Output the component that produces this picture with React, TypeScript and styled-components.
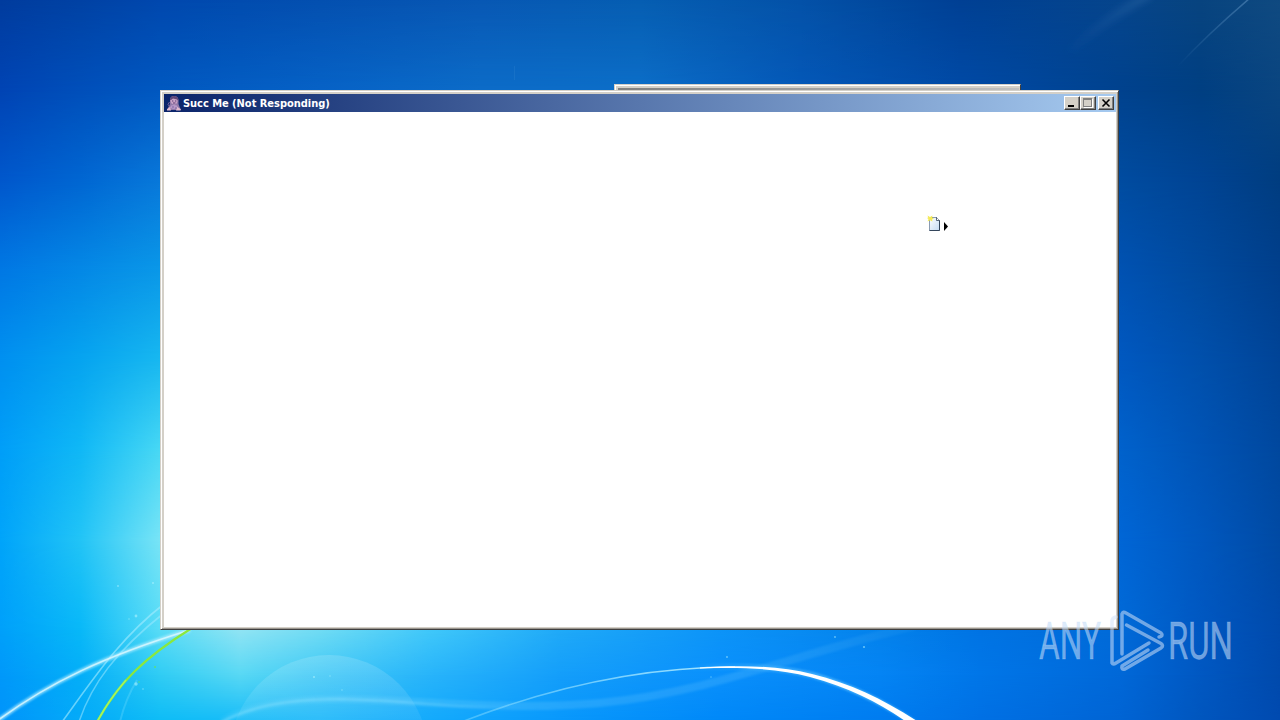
import React from "react";
import styled, { createGlobalStyle } from "styled-components";

const GlobalStyle = createGlobalStyle`
  html, body { margin: 0; padding: 0; overflow: hidden; background: #0060c8; }
  * { box-sizing: border-box; }
`;

const Desktop = styled.main`
  position: relative;
  width: 1280px;
  height: 720px;
  overflow: hidden;
  padding: 90px 161px 90px 160px;
`;

const Band = styled.div<{ $from: number; $to: number; $stops: string }>`
  position: absolute;
  inset: 0;
  background: linear-gradient(to right, ${(p) => p.$stops});
  mask-image: linear-gradient(to bottom, transparent ${(p) => p.$from}px, #000 ${(p) => p.$to}px);
`;

const Scenery = styled.svg`
  position: absolute;
  inset: 0;
`;

const BackWindow = styled.div`
  position: absolute;
  left: 614px;
  top: 84px;
  width: 407px;
  height: 20px;
  border: 1px solid #d4d0c8;
  border-right-color: #404040;
  background: linear-gradient(to right, #808080, #c0c0c0) 3px 3px / 401px 18px no-repeat #d4d0c8;
  box-shadow: inset 1px 1px 0 #fff;
`;

const Window = styled.section`
  position: relative;
  display: flex;
  flex-direction: column;
  width: 959px;
  height: 540px;
  padding: 3px 2px 2px 3px;
  background: #d4d0c8;
  border: 1px solid;
  border-color: #d4d0c8 #404040 #404040 #d4d0c8;
  box-shadow: inset 1px 1px 0 #fff, inset -1px -1px 0 #9a968f;
`;

const TitleBar = styled.header`
  display: flex;
  align-items: center;
  flex: 0 0 18px;
  padding: 0 2px;
  background: linear-gradient(to right, #0a246a, #a6caf0);
`;

const Title = styled.h1`
  flex: 1;
  margin: 0 0 0 1px;
  padding-top: 1px;
  color: #fff;
  font: bold 11px/17px "DejaVu Sans Condensed", "DejaVu Sans", sans-serif;
  letter-spacing: -0.03px;
  white-space: nowrap;
`;

const Controls = styled.div`
  display: flex;
`;

const ControlButton = styled.button<{ $gap?: boolean }>`
  width: 16px;
  height: 14px;
  padding: 0;
  margin-left: ${(p) => (p.$gap ? 2 : 0)}px;
  border: 1px solid;
  border-color: #fff #404040 #404040 #fff;
  background: #d4d0c8;
  box-shadow: inset -1px -1px 0 #808080;
  svg { display: block; }
`;

const Client = styled.div`
  flex: 1;
  background: #fff;
`;

const NewItem = styled.svg`
  position: absolute;
  left: 927px;
  top: 215px;
`;

const Watermark = styled.svg`
  position: absolute;
  left: 1030px;
  top: 600px;
  overflow: visible;
  font-family: Roboto, sans-serif;
  font-size: 51px;
`;

const cols = (xs: number[], cs: string) =>
  cs.split(" ").map((c, i) => `#${c} ${xs[i]}px`).join(", ");

const topX = [0, 80, 160, 320, 480, 640, 800, 960, 1120, 1200, 1280];
const sideX = [0, 80, 160, 1120, 1200, 1280];
const lowX = [0, 80, 160, 240, 320, 430, 560, 720, 880, 980, 1120, 1200, 1280];

const bands: [number, string][] = [
  [0, cols(topX, "003c9e 0042a4 0048ae 0450b0 0858b4 065eb2 0452a8 004094 06458c 08447f 104a80")],
  [90, cols(topX, "0044b4 004fba 0058c0 0662c6 0c6cc8 0c6ec8 0458b8 004aa6 00428e 003f82 0a4580")],
  [180, cols(sideX, "0057cc 0066d2 0878da 004ca0 004494 003d80")],
  [270, cols(sideX, "0078e4 0488e6 0a98e8 0052b2 004a9e 003f8c")],
  [360, cols(sideX, "0090f0 06a4f0 18b8f0 0058c0 0050ac 004497")],
  [450, cols(sideX, "009ef8 10b8f6 48d8f4 0062cc 0054b6 00489e")],
  [540, cols(sideX, "00a4fa 22c4f6 78e4f6 0066d6 0058bf 004aa4")],
  [630, cols(lowX, "00a0fa 08b8f8 58dcf6 90e4f4 70dcf4 40c8fa 20aaf8 0c94f8 0482ec 0074e4 006ad8 0058c2 004aac")],
  [675, cols(lowX, "0098fa 04aef8 30ccf4 58d8f4 40c8f6 28b4fa 149efa 0a90fc 0484f4 0076e8 0068d8 0058c2 004aac")],
  [720, cols(lowX, "0094fa 04aaf8 0ebcf6 18bcf8 20b8fa 14aafc 0898fc 0088f8 007cf0 0070e4 0064d4 0056be 004ab0")],
];

const sparks: [number, number, number][] = [
  [118, 586, 0.9], [153, 583, 1], [136, 616, 1.4], [129, 619, 0.7], [136, 684, 1.7], [143, 689, 0.8],
  [314, 677, 1.1], [330, 676, 0.7], [342, 690, 0.7], [727, 657, 0.9], [835, 637, 0.9], [864, 647, 1.1], [711, 677, 0.7],
];

function Wallpaper() {
  return (
    <>
      {bands.map(([y, stops], i) => (
        <Band key={y} $from={i ? bands[i - 1][0] : -1} $to={y} $stops={stops} />
      ))}
      <Scenery width="1280" height="720" fill="none">
        <defs>
          <filter id="soft" x="-20%" y="-20%" width="140%" height="140%"><feGaussianBlur stdDeviation="1" /></filter>
          <filter id="haze" x="-20%" y="-50%" width="140%" height="200%"><feGaussianBlur stdDeviation="3" /></filter>
          <linearGradient id="bubble" x1="0" y1="0" x2="0" y2="1">
            <stop offset="0" stopColor="#fff" stopOpacity=".15" />
            <stop offset=".35" stopColor="#fff" stopOpacity=".06" />
          </linearGradient>
          <linearGradient id="arc" gradientUnits="userSpaceOnUse" x1="460" y1="0" x2="920" y2="0">
            <stop offset="0" stopColor="#8fe0ff" stopOpacity=".4" />
            <stop offset=".5" stopColor="#a8e8ff" stopOpacity=".9" />
            <stop offset=".75" stopColor="#fff" />
          </linearGradient>
          <linearGradient id="glow" gradientUnits="userSpaceOnUse" x1="690" y1="0" x2="840" y2="0">
            <stop offset="0" stopColor="#65c6ff" stopOpacity="0" />
            <stop offset="1" stopColor="#65c6ff" stopOpacity=".7" />
          </linearGradient>
          <linearGradient id="thread" gradientUnits="userSpaceOnUse" x1="222" y1="0" x2="520" y2="0">
            <stop offset="0" stopColor="#a8ecff" stopOpacity=".4" />
            <stop offset=".6" stopColor="#a8ecff" stopOpacity=".35" />
            <stop offset="1" stopColor="#a8ecff" stopOpacity="0" />
          </linearGradient>
          <linearGradient id="swoosh" gradientUnits="userSpaceOnUse" x1="222" y1="0" x2="915" y2="0">
            <stop offset="0" stopColor="#a0e4ff" stopOpacity=".1" />
            <stop offset=".4" stopColor="#a0e4ff" stopOpacity=".17" />
            <stop offset=".75" stopColor="#a0e4ff" stopOpacity=".15" />
            <stop offset="1" stopColor="#a0e4ff" stopOpacity=".05" />
          </linearGradient>
          <linearGradient id="ray" gradientUnits="userSpaceOnUse" x1="1178" y1="66" x2="1250" y2="0">
            <stop offset="0" stopColor="#7fb0dc" stopOpacity="0" />
            <stop offset="1" stopColor="#7fb0dc" stopOpacity=".4" />
          </linearGradient>
          <linearGradient id="beam" gradientUnits="userSpaceOnUse" x1="1065" y1="55" x2="1150" y2="0">
            <stop offset="0" stopColor="#5a90c8" stopOpacity="0" />
            <stop offset="1" stopColor="#5a90c8" stopOpacity=".2" />
          </linearGradient>
        </defs>
        <path d="M1178 66Q1208 34 1250 -2" stroke="url(#ray)" strokeWidth="1.5" />
        <path d="M1060 62Q1090 28 1150 -6" stroke="url(#beam)" strokeWidth="9" filter="url(#haze)" />
        <circle cx="329" cy="754" r="99" fill="url(#bubble)" />
        <path d="M222 722Q258 699 340 699C440 701 510 711 600 703C710 693 790 655 915 626" stroke="url(#swoosh)" strokeWidth="8" filter="url(#soft)" />
        <path d="M222 722Q262 699 340 699Q385 700 430 704T520 706" stroke="url(#thread)" strokeWidth="2.2" filter="url(#soft)" />
        <path d="M120 722Q125 700 137 680" stroke="#8ce8ff" strokeOpacity=".25" strokeWidth="2" />
        <path d="M62 722C94 678 120 638 164 604" stroke="#a6ecff" strokeOpacity=".6" strokeWidth="1.6" />
        <path d="M79 722C91 685 116 651 164 613" stroke="#a6ecff" strokeOpacity=".5" strokeWidth="1.6" />
        <path d="M-3 721C50 682 105 656 190 630" stroke="#b8efff" strokeOpacity=".7" strokeWidth="4.2" filter="url(#soft)" />
        <path d="M-3 721C50 682 105 656 190 630" stroke="#e2faff" strokeOpacity=".75" strokeWidth="1.6" />
        <path d="M97 722C118 683 145 657 192 628" stroke="#8be83c" strokeWidth="2.2" />
        <path d="M97 722C106 705 114 694 126 680" stroke="#a4f45a" strokeWidth="1.8" />
        <path d="M464 721C570 680 660 667 735 667" stroke="url(#arc)" strokeWidth="1.6" />
        <path d="M690 668C735 665 775 666 812 675C850 686 885 703 917 725" stroke="url(#glow)" strokeWidth="6" filter="url(#soft)" />
        <path d="M700 667.5C745 665 780 666 812 674C852 684 885 700 920 723L908 723C880 703 850 688 810 677C780 669 748 667 700 668.5Z" fill="#fff" />
        {sparks.map(([x, y, r]) => (
          <circle key={`${x}-${y}`} cx={x} cy={y} r={r} fill="#b8f6ff" fillOpacity=".55" />
        ))}
        <circle cx="155" cy="667" r="1" fill="#58dc80" />
        <circle cx="139" cy="682" r=".8" fill="#58dc80" />
        <path d="M514.5 66V80" stroke="#5aa0e0" strokeOpacity=".15" />
      </Scenery>
    </>
  );
}

function AppIcon() {
  return (
    <svg width="16" height="16" viewBox="0 0 16 16">
      <path d="M4 5Q4 1 8 1Q12 1 12.5 5L12.5 9L14 13L13 15H3L2 13L4 9Z" fill="#8f78a8" />
      <path d="M4.5 5Q5 2 8.5 2Q11.5 3 11.5 6Q11 9.5 8 9.5Q4.5 9 4.5 5" fill="#c9a3c6" />
      <path d="M4 5Q4 1 8.5 1Q12.5 1.5 12.5 6L11 4.5L7 3.5L5 5Z" fill="#604878" />
      <path d="M6 6H7.3M9 6H10.3M7 8H9.5" stroke="#5b3b76" />
      <path d="M5 10.5Q8 9.5 11 10.5L12 13L8 14L4 13Z" fill="#b898c8" />
      <path d="M1 14L4 12L5 15.5H1ZM11 12L15 14L14.5 15.5H10Z" fill="#e0b8cc" />
      <path d="M3.5 7L2 9.5L3.5 11.5M6 12H8M9 13H11" stroke="#7d66a2" fill="none" />
    </svg>
  );
}

export default function App() {
  return (
    <Desktop>
      <GlobalStyle />
      <Wallpaper />
      <BackWindow />
      <Window>
        <TitleBar>
          <AppIcon />
          <Title>Succ Me (Not Responding)</Title>
          <Controls>
            <ControlButton aria-label="Minimize">
              <svg width="14" height="12"><path d="M3 8h6v2H3z" fill="#000" /></svg>
            </ControlButton>
            <ControlButton aria-label="Maximize">
              <svg width="14" height="12" shapeRendering="crispEdges">
                <path d="M3 2h9v9H3z" fill="#fff" />
                <path d="M2 1h9v9H2z" fill="#808080" />
                <path d="M3 3h7v6H3z" fill="#d4d0c8" />
              </svg>
            </ControlButton>
            <ControlButton aria-label="Close" $gap>
              <svg width="14" height="12"><path d="M3.5 2.5l7 7M10.5 2.5l-7 7" stroke="#000" strokeWidth="1.6" /></svg>
            </ControlButton>
          </Controls>
        </TitleBar>
        <Client />
      </Window>
      <NewItem width="22" height="18">
        <defs>
          <linearGradient id="sheet" x1="0" y1="0" x2="1" y2="1">
            <stop offset="0" stopColor="#fff" /><stop offset="1" stopColor="#c4daf2" />
          </linearGradient>
        </defs>
        <path d="M2.5 2.5H9.5L12.5 5.5V15.5H2.5Z" fill="url(#sheet)" stroke="#8a9bb0" />
        <path d="M9.5 2.5L12.5 5.5V15.5H2.5" fill="none" stroke="#34465c" />
        <path d="M9.5 2.5V5.5H12.5" fill="#fff" stroke="#34465c" strokeWidth=".8" />
        <path d="M.5 .5L3 2L5.5 .5L5 2.8L7 3.5L5 4.5L5.5 6.5L3 5.2L.5 6.5L1.5 4L0 3L1.2 2.5Z" fill="#f4ea58" />
        <path d="M17 7V16L21 11.5Z" fill="#000" />
      </NewItem>
      <Watermark width="240" height="80" fill="#c4dcf8">
        <g fillOpacity=".56" stroke="#c4dcf8" strokeOpacity=".25" strokeWidth=".8">
          <text x="9" y="59" textLength="62" lengthAdjust="spacingAndGlyphs">ANY</text>
          <text x="138" y="59" textLength="65" lengthAdjust="spacingAndGlyphs">RUN</text>
        </g>
        <path
          d="M86 17Q82 18 82 21V63Q83 65 86 63L119 43M92 54V14Q93 11 96 13L131 33Q134 36 129 37M96.500 25L131 43.500Q134 45.500 131 48L95 69Q91 70 92 66L118 50"
          fill="none"
          strokeLinejoin="round"
          strokeLinecap="round"
          stroke="#d0e2f8"
          strokeOpacity=".54"
          strokeWidth="3.500"
        />
      </Watermark>
    </Desktop>
  );
}
